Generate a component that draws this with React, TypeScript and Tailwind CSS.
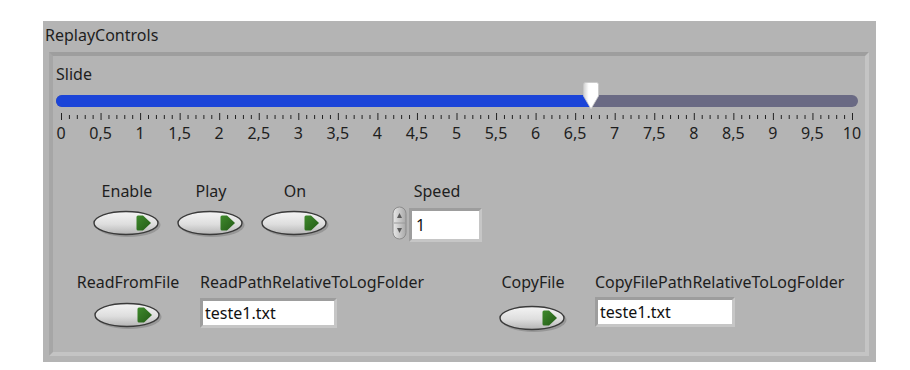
import React from "react";

const FONT = { fontFamily: '"Noto Sans", "Open Sans", sans-serif' };

function BoolButton() {
  return (
    <svg width="70" height="28" viewBox="0 0 70 28">
      <defs>
        <linearGradient id="btnG" x1="0" y1="0" x2="0" y2="1">
          <stop offset="0" stopColor="#f4f4f4" />
          <stop offset="0.55" stopColor="#dedede" />
          <stop offset="1" stopColor="#b4b4b4" />
        </linearGradient>
        <linearGradient id="ledG" x1="0" y1="0" x2="1" y2="1">
          <stop offset="0" stopColor="#3f8a2c" />
          <stop offset="1" stopColor="#235a16" />
        </linearGradient>
      </defs>
      <ellipse cx="36" cy="15" rx="32.5" ry="12" fill="#8a8a8a" opacity="0.7" />
      <ellipse cx="34" cy="13" rx="32" ry="11.5" fill="url(#btnG)" stroke="#3a3a3a" strokeWidth="1.4" />
      <path d="M46,5.5 H51 L59,13 L51,20.5 H46 Q44.5,20.5 44.5,19 V7 Q44.5,5.5 46,5.5 Z" fill="url(#ledG)" />
    </svg>
  );
}

function Spinner() {
  return (
    <svg width="16" height="34" viewBox="0 0 16 34">
      <defs>
        <linearGradient id="spG" x1="0" y1="0" x2="1" y2="0">
          <stop offset="0" stopColor="#e8e8e8" />
          <stop offset="1" stopColor="#a8a8a8" />
        </linearGradient>
      </defs>
      <rect x="1" y="1" width="13" height="32" rx="6.5" fill="url(#spG)" stroke="#8c8c8c" />
      <line x1="2" y1="17" x2="13" y2="17" stroke="#9a9a9a" />
      <path d="M7.5,7 L10,12 H5 Z" fill="#5a5a5a" />
      <path d="M7.5,27 L10,22 H5 Z" fill="#5a5a5a" />
    </svg>
  );
}

function StringBox({ w, text }: { w: string; text: string }) {
  return (
    <div className={`${w} h-[30px] border-[3px] border-t-[#9d9d9d] border-l-[#9d9d9d] border-r-[#c6c6c6] border-b-[#c6c6c6] bg-white flex items-center`}>
      <span className="pl-[2px] text-[16px] leading-[20px] text-[#111]">{text}</span>
    </div>
  );
}

export default function App() {
  const value = 6.7;
  const ppu = 79.1;
  const fill = 5 + value * ppu;
  const labels = ["0", "0,5", "1", "1,5", "2", "2,5", "3", "3,5", "4", "4,5", "5", "5,5", "6", "6,5", "7", "7,5", "8", "8,5", "9", "9,5", "10"];
  const ticks = Array.from({ length: 101 }, (_, i) => i);
  return (
    <div className="w-[910px] h-[370px] bg-white pt-[21px] pl-[43px]" style={FONT}>
      <div className="w-[833px] h-[341px] bg-[#b4b4b4] flex flex-col text-[#1e1e1e]">
        <div className="h-[31px] pl-[2px] pt-[4px] text-[16px] leading-[20px]">ReplayControls</div>
        <div className="ml-[6px] w-[820px] h-[304px] border-[4px] border-t-[#9e9e9e] border-l-[#a6a6a6] border-r-[#c4c4c4] border-b-[#c4c4c4] flex flex-col">
          <div className="pl-[3px] mt-[8px] text-[16px] leading-[20px]">Slide</div>
          <div className="relative ml-[3px] -mt-[2px] w-[802px] h-[27px]">
            <div className="mt-[13px] h-[12px] w-[802px] rounded-full bg-[#6a6a84] overflow-hidden flex">
              <div className="h-full bg-[#1b44d8]" style={{ width: fill }} />
            </div>
            <svg className="absolute top-0" style={{ left: fill - 8 }} width="16" height="28" viewBox="0 0 16 28">
              <defs>
                <linearGradient id="thG" x1="0" y1="0" x2="1" y2="0">
                  <stop offset="0" stopColor="#d0d0d0" />
                  <stop offset="0.35" stopColor="#ffffff" />
                  <stop offset="1" stopColor="#ffffff" />
                </linearGradient>
              </defs>
              <path d="M2.5,0.5 H13.5 Q15.5,0.5 15.5,2.5 V14 L8,27 L0.5,14 V2.5 Q0.5,0.5 2.5,0.5 Z" fill="url(#thG)" stroke="#c8c8c8" strokeWidth="0.8" />
            </svg>
          </div>
          <svg className="ml-[7px] mt-[3px]" width="794" height="9" viewBox="0 0 794 9">
            {ticks.map((i) => {
              const x = 1.5 + i * 7.91;
              const major = i % 5 === 0;
              return <line key={i} x1={x} x2={x} y1={major ? 1 : 3} y2={major ? 8 : 7} stroke="#222" strokeWidth="1" />;
            })}
          </svg>
          <div className="w-[807px] flex justify-between mt-[2px]">
            {labels.map((l) => (
              <div key={l} className="w-[16px] flex justify-center text-[16px] leading-[20px] whitespace-nowrap">{l}</div>
            ))}
          </div>
          <div className="flex mt-[38px] ml-[40px]">
            <div className="flex gap-[16px]">
              {["Enable", "Play", "On"].map((t) => (
                <div key={t} className="w-[68px] flex flex-col items-center">
                  <div className="text-[16px] leading-[20px]">{t}</div>
                  <div className="mt-[9px]"><BoolButton /></div>
                </div>
              ))}
            </div>
            <div className="ml-[63px] w-[90px] flex flex-col items-center">
              <div className="text-[16px] leading-[20px]">Speed</div>
              <div className="mt-[5px] flex items-start">
                <Spinner />
                <div className="ml-[1px] mt-[2px] w-[73px] h-[34px] border-[3px] border-t-[#9d9d9d] border-l-[#9d9d9d] border-r-[#c6c6c6] border-b-[#c6c6c6] bg-white flex items-center">
                  <span className="pl-[4px] text-[16px] leading-[20px] text-[#111]">1</span>
                </div>
              </div>
            </div>
          </div>
          <div className="flex mt-[30px] ml-[25px]">
            <div className="w-[100px] flex flex-col items-center">
              <div className="text-[16px] leading-[20px] whitespace-nowrap">ReadFromFile</div>
              <div className="mt-[10px]"><BoolButton /></div>
            </div>
            <div className="ml-[22px] w-[240px] flex flex-col items-start">
              <div className="text-[16px] leading-[20px] whitespace-nowrap">ReadPathRelativeToLogFolder</div>
              <div className="mt-[6px]"><StringBox w="w-[137px]" text="teste1.txt" /></div>
            </div>
            <div className="ml-[58px] w-[70px] flex flex-col items-center">
              <div className="text-[16px] leading-[20px] whitespace-nowrap">CopyFile</div>
              <div className="mt-[13px]"><BoolButton /></div>
            </div>
            <div className="ml-[27px] w-[260px] flex flex-col items-start">
              <div className="text-[16px] leading-[20px] whitespace-nowrap">CopyFilePathRelativeToLogFolder</div>
              <div className="mt-[5px]"><StringBox w="w-[140px]" text="teste1.txt" /></div>
            </div>
          </div>
        </div>
      </div>
    </div>
  );
}
